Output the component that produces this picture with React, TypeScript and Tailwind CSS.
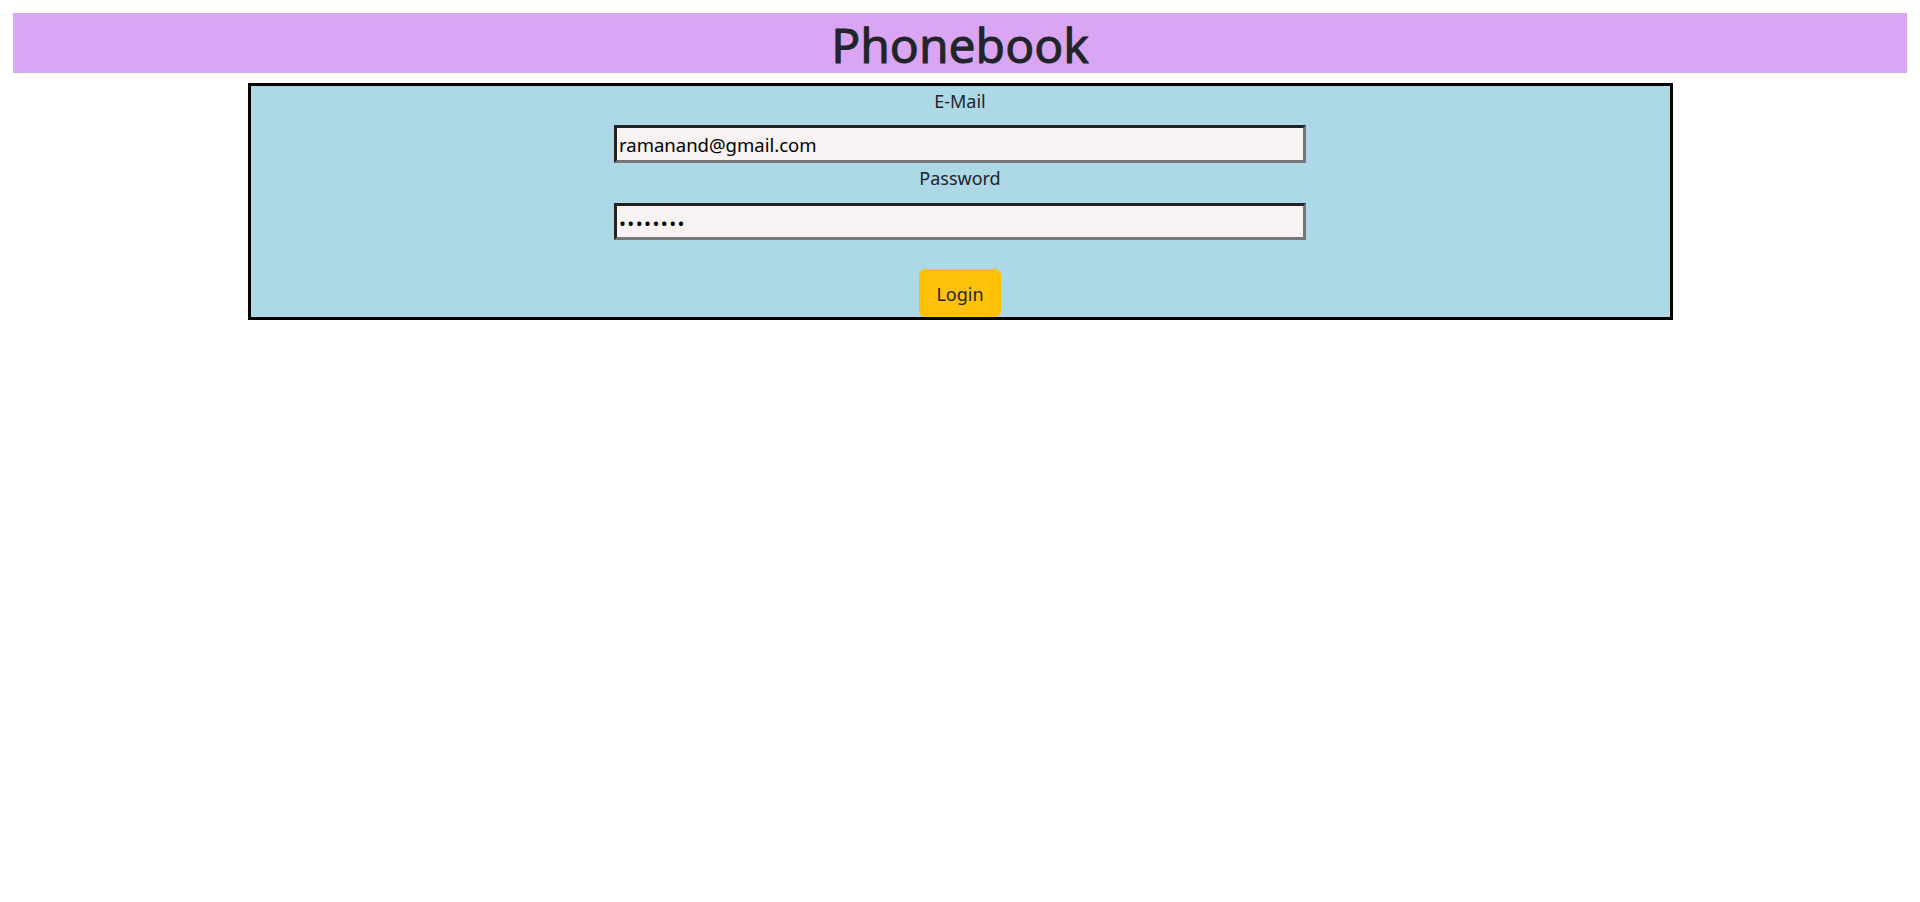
import React from "react";

export default function App() {
  return (
    <div
      className="min-h-screen w-full bg-white text-[#212529]"
      style={{ fontFamily: '"Noto Sans", "Open Sans", sans-serif' }}
    >
      <div className="mx-[13px] pt-[13px]">
        <div className="flex h-[60px] items-center justify-center bg-[#daa5f2]">
          <h1 className="pt-[4px] text-[48px] font-normal leading-none text-[#212529] [-webkit-text-stroke:0.9px_#212529]">
            Phonebook
          </h1>
        </div>
      </div>
      <div className="mx-auto mt-[10px] flex h-[237px] w-[1425px] flex-col items-center border-[3px] border-black bg-[#add8e6]">
        <label className="mb-[10px] h-[29px] text-[18px] leading-[31px]">E-Mail</label>
        <input
          type="email"
          readOnly
          defaultValue="ramanand@gmail.com"
          className="box-border h-[38px] w-[692px] border-[3px] border-t-[#222222] border-l-[#222222] border-r-[#767676] border-b-[#767676] bg-[#f8f2f2] px-[2px] pt-[1px] text-[18.5px] text-black outline-none"
        />
        <label className="h-[29px] text-[18px] leading-[31px]">Password</label>
        <input
          type="password"
          readOnly
          defaultValue="12345678"
          className="mt-[11px] box-border h-[38px] w-[692px] border-[3px] border-t-[#222222] border-l-[#222222] border-r-[#767676] border-b-[#767676] bg-[#f8f2f2] px-[2px] pt-[1px] text-[18.5px] tracking-[1.4px] text-black outline-none"
        />
        <button
          type="button"
          className="mt-[29px] h-[48px] w-[82px] rounded-[6px] border border-[#ffc107] bg-[#ffc107] pt-[3px] text-[18px] text-[#212529]"
        >
          Login
        </button>
      </div>
    </div>
  );
}
